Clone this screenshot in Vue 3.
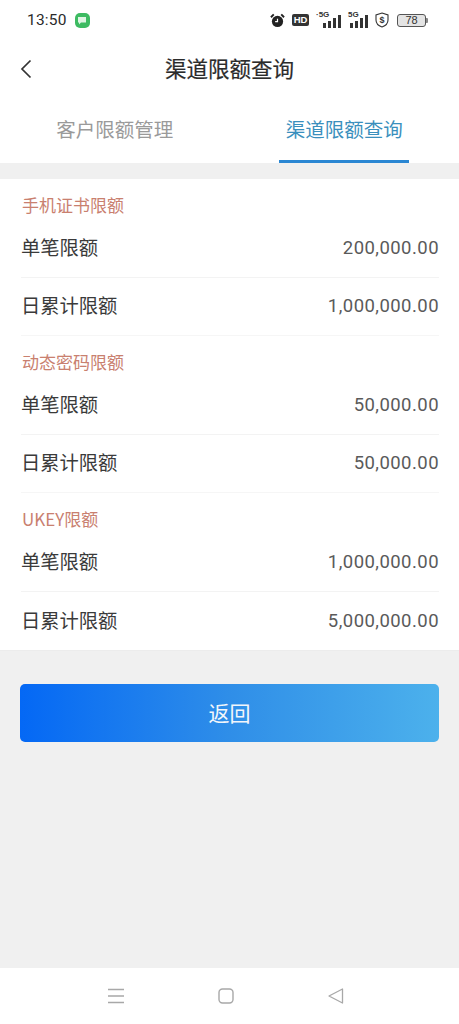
<script setup>
const sections = [
  { title: '手机证书限额', rows: [['单笔限额', '200,000.00'], ['日累计限额', '1,000,000.00']] },
  { title: '动态密码限额', rows: [['单笔限额', '50,000.00'], ['日累计限额', '50,000.00']] },
  { title: 'UKEY限额', rows: [['单笔限额', '1,000,000.00'], ['日累计限额', '5,000,000.00']] },
]
const bars = [5, 7, 10, 13]
</script>

<template>
  <div class="page">
    <header class="status">
      <div class="status-left">
        <span class="time">13:50</span>
        <span class="app-badge">
          <svg width="10" height="9" viewBox="0 0 10 9"><path d="M1 1h8v5.500H4L2 8.500V6.500H1z" fill="#dff5e4" /></svg>
        </span>
      </div>
      <div class="status-right">
        <svg class="alarm" width="15" height="15" viewBox="0 0 16 16">
          <circle cx="8" cy="9" r="6" fill="#222" />
          <path d="M1 4.500 4 1.500M15 4.500 12 1.500" stroke="#222" stroke-width="2" />
          <path d="M8 6v3.300H5.500" stroke="#fff" stroke-width="1.300" fill="none" />
        </svg>
        <span class="hd">HD</span>
        <div class="signal first">
          <span class="net">·5G</span>
          <span class="bars"><i v-for="b in bars" :key="b" :style="{ height: b + 'px' }"></i></span>
        </div>
        <div class="signal">
          <span class="net">5G</span>
          <span class="bars"><i v-for="b in bars" :key="b" :style="{ height: b + 'px' }"></i></span>
        </div>
        <svg class="shield" width="14" height="16" viewBox="0 0 14 16">
          <path d="M7 1 13 3v5c0 3.500-2.500 5.800-6 7C3.500 13.800 1 11.500 1 8V3z" fill="none" stroke="#333" stroke-width="1.100" />
          <text x="7" y="11" text-anchor="middle" class="shield-text">$</text>
        </svg>
        <div class="battery"><span>78</span></div>
      </div>
    </header>

    <nav class="nav">
      <svg class="back" width="12" height="20" viewBox="0 0 12 20">
        <path d="M10.500 1.500 2 10l8.500 8.500" fill="none" stroke="#333" stroke-width="1.700" />
      </svg>
      <h1>渠道限额查询</h1>
    </nav>

    <div class="tabs">
      <div class="tab">客户限额管理</div>
      <div class="tab active">渠道限额查询</div>
    </div>

    <main class="list">
      <section v-for="s in sections" :key="s.title">
        <div class="section-title">{{ s.title }}</div>
        <div v-for="r in s.rows" :key="r[0]" class="row">
          <span class="label">{{ r[0] }}</span>
          <span class="amount">{{ r[1] }}</span>
        </div>
      </section>
    </main>

    <div class="action">
      <button class="return" type="button">返回</button>
    </div>

    <footer class="softkeys">
      <svg width="18" height="16" viewBox="0 0 18 16">
        <path d="M1 1.500h16M1 8h16M1 14.500h16" stroke="#a8a8a8" stroke-width="1.400" />
      </svg>
      <svg width="18" height="18" viewBox="0 0 18 18">
        <rect x="2" y="2" width="14" height="14" rx="3.500" fill="none" stroke="#a8a8a8" stroke-width="1.400" />
      </svg>
      <svg width="18" height="18" viewBox="0 0 18 18">
        <path d="M15.500 2v14L2 9z" fill="none" stroke="#a8a8a8" stroke-width="1.300" stroke-linejoin="round" />
      </svg>
    </footer>
  </div>
</template>

<style>
html, body { margin: 0; background: #f0f0f0; }
</style>

<style scoped>
.page {
  width: 459px;
  height: 1024px;
  display: flex;
  flex-direction: column;
  background: #f0f0f0;
  font-family: "Noto Sans CJK SC", "Noto Sans", sans-serif;
  overflow: hidden;
  color: #333;
}
.status {
  height: 40px;
  box-sizing: border-box;
  padding: 0 33px 0 27px;
  display: flex;
  align-items: center;
  justify-content: space-between;
  background: #fff;
}
.status-left { display: flex; align-items: center; gap: 8px; }
.time { font: 15.500px/20px Roboto, sans-serif; color: #2a2a2a; letter-spacing: 0.200px; }
.app-badge {
  width: 15px;
  height: 15px;
  border-radius: 5px;
  background: #3dbb62;
  display: flex;
  align-items: center;
  justify-content: center;
}
.status-right { display: flex; align-items: center; }
.alarm { margin-right: 7px; }
.hd {
  width: 17px;
  height: 12px;
  background: #333;
  color: #fff;
  border-radius: 2px;
  font: 700 9.500px/12px "Liberation Sans", sans-serif;
  text-align: center;
  margin-right: 7px;
}
.signal { position: relative; width: 20px; height: 15px; margin-right: 7px; }
.signal.first { width: 25px; }
.net {
  position: absolute;
  left: 0;
  top: -2px;
  font: 700 8px/8px "Liberation Sans", sans-serif;
  color: #333;
}
.bars {
  position: absolute;
  right: 0;
  bottom: 0;
  display: flex;
  align-items: flex-end;
  gap: 2px;
}
.bars i { display: block; width: 3px; background: #333; }
.shield { margin: 0 8px 0 0; }
.shield-text { font: 700 9px "Liberation Sans", sans-serif; fill: #333; }
.battery {
  position: relative;
  width: 27px;
  height: 11px;
  border: 1px solid #555;
  border-radius: 3px;
  background: #e4e4e4;
  display: flex;
  align-items: center;
  justify-content: center;
  font: 11px/11px "Liberation Sans", sans-serif;
  color: #333;
}
.battery::after {
  content: "";
  position: absolute;
  right: -3px;
  top: 3px;
  width: 2px;
  height: 5px;
  background: #888;
  border-radius: 0 1px 1px 0;
}
.nav {
  position: relative;
  height: 56px;
  display: flex;
  align-items: center;
  justify-content: center;
  background: #fff;
}
.nav h1 {
  margin: 0 0 1px;
  font-size: 21.500px;
  font-weight: 400;
  color: #2b2b2b;
  line-height: 30px;
  -webkit-text-stroke: 0.200px #2b2b2b;
}
.back { position: absolute; left: 20px; top: 19px; }
.tabs {
  height: 67px;
  display: flex;
  background: #fff;
}
.tab {
  position: relative;
  width: 50%;
  display: flex;
  justify-content: center;
  padding-top: 18px;
  box-sizing: border-box;
  font-size: 19.500px;
  line-height: 30px;
  color: #9a9a9a;
}
.tab.active { color: #3a8fbd; }
.tab.active::after {
  content: "";
  position: absolute;
  left: 49px;
  bottom: 0;
  width: 130px;
  height: 3px;
  background: #2b87d3;
}
.list {
  margin-top: 16px;
  background: #fff;
  border-bottom: 1px solid #ececec;
}
.section-title {
  height: 40px;
  box-sizing: border-box;
  padding: 13px 22px 0;
  font-size: 17px;
  line-height: 26px;
  color: #c9806f;
}
.row {
  height: 58.500px;
  box-sizing: border-box;
  margin: 0 20px 0 21px;
  display: flex;
  align-items: center;
  justify-content: space-between;
  font-size: 19.300px;
  color: #3a3a3a;
  border-bottom: 1px solid #f3f3f3;
}
.label { margin-bottom: 2px; }
section .row:last-child { border-bottom: 0; }
section:not(:last-child) .row:last-child { border-bottom: 1px solid #f6f6f6; }
.amount {
  font-family: Roboto, sans-serif;
  font-size: 18.500px;
  color: #5a5a5a;
  letter-spacing: 0.450px;
}
.action {
  flex: 1;
  padding: 33px 20px 0;
}
.return {
  width: 100%;
  height: 58px;
  border: 0;
  border-radius: 5px;
  background: linear-gradient(90deg, #0468f5 0%, #2f8ee8 50%, #4cb1ec 100%);
  color: #f2f6fb;
  font-family: inherit;
  font-size: 21px;
  padding: 0 0 3px;
}
.softkeys {
  height: 56px;
  box-sizing: border-box;
  background: #fff;
  display: flex;
  align-items: center;
  justify-content: center;
  gap: 92px;
  padding-right: 8px;
}
</style>
